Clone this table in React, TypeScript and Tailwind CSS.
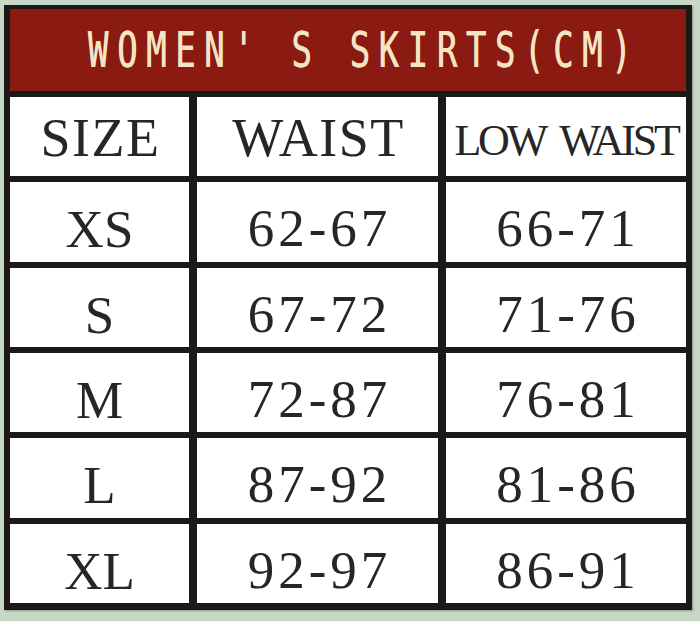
const rows = [
  { size: "XS", waist: "62-67", low: "66-71" },
  { size: "S", waist: "67-72", low: "71-76" },
  { size: "M", waist: "72-87", low: "76-81" },
  { size: "L", waist: "87-92", low: "81-86" },
  { size: "XL", waist: "92-97", low: "86-91" },
];

const serif = "font-['Liberation_Serif',serif] text-[#262626]";

export default function App() {
  return (
    <div className="min-h-[621px] w-[700px] bg-[#c8d8c6] pt-[5px] pl-[4px]">
      <div className="flex h-[605px] w-[688px] flex-col gap-[6px] bg-[#1c1a19] px-[6px] pt-[4px] pb-[7px] shadow-[1px_1px_2px_rgba(0,0,0,0.3)]">
        <div className="flex h-[82px] shrink-0 items-center justify-center bg-[#8b1a12] pl-[32px]">
          <span className="inline-block scale-y-[1.44] font-['DejaVu_Sans_Mono',monospace] text-[34px] leading-none tracking-[8.6px] text-[#f4e4c4] [text-shadow:0.5px_0_0_#f4e4c4]">
            WOMEN' S SKIRTS(CM)
          </span>
        </div>

        <div className="grid flex-1 grid-cols-[179px_241px_240px] gap-x-[8px]">
          <div className={`flex items-center justify-center bg-white pt-[2px] pl-[2px] text-[54px] leading-none tracking-[1.5px] ${serif}`}>
            SIZE
          </div>
          <div className={`flex items-center justify-center bg-white pt-[2px] pl-[2px] text-[54px] leading-none tracking-[1.5px] ${serif}`}>
            WAIST
          </div>
          <div className={`flex items-center justify-center bg-white pt-[8px] text-[44px] leading-none tracking-[-3.2px] [word-spacing:8px] ${serif}`}>
            LOW WAIST
          </div>
        </div>

        {rows.map((row) => (
          <div key={row.size} className="grid flex-1 grid-cols-[179px_241px_240px] gap-x-[8px]">
            <div className={`flex items-center justify-center bg-white pt-[16px] text-[53px] leading-none ${serif}`}>
              {row.size}
            </div>
            <div className={`flex items-center justify-center bg-white pt-[14px] pl-[4px] text-[53px] leading-none tracking-[4px] ${serif}`}>
              {row.waist}
            </div>
            <div className={`flex items-center justify-center bg-white pt-[14px] pl-[4px] text-[53px] leading-none tracking-[4px] ${serif}`}>
              {row.low}
            </div>
          </div>
        ))}
      </div>
    </div>
  );
}
